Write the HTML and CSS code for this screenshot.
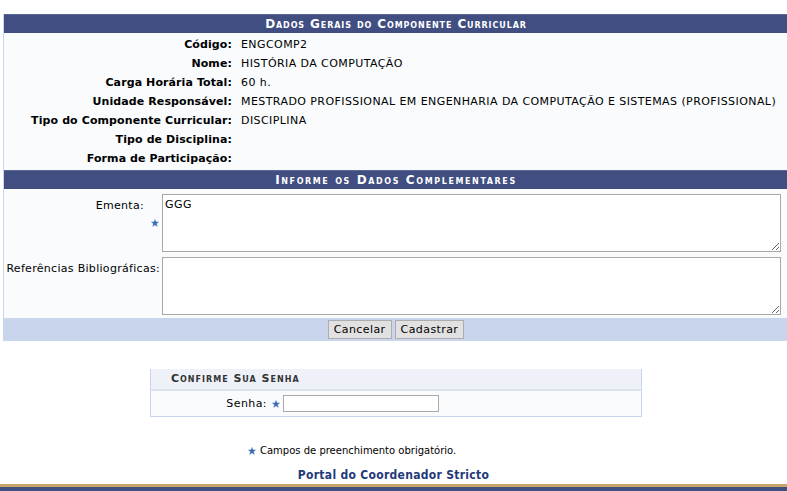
FILE: index.html
```html
<!DOCTYPE html>
<html lang="pt-BR">
<head>
<meta charset="utf-8">
<title>Portal do Coordenador Stricto</title>
<link rel="stylesheet" href="styles.css">
</head>
<body>
<div class="page">
  <section class="form">
    <div class="caption">Dados Gerais do Componente Curricular</div>
    <dl class="info">
      <dt>Código:</dt><dd>ENGCOMP2</dd>
      <dt>Nome:</dt><dd>HISTÓRIA DA COMPUTAÇÃO</dd>
      <dt>Carga Horária Total:</dt><dd>60 h.</dd>
      <dt>Unidade Responsável:</dt><dd>MESTRADO PROFISSIONAL EM ENGENHARIA DA COMPUTAÇÃO E SISTEMAS (PROFISSIONAL)</dd>
      <dt>Tipo do Componente Curricular:</dt><dd>DISCIPLINA</dd>
      <dt>Tipo de Disciplina:</dt><dd></dd>
      <dt>Forma de Participação:</dt><dd></dd>
    </dl>
    <div class="caption caption-wide">Informe os Dados Complementares</div>
    <div class="fields">
      <label class="lbl req" for="ementa">
        <span class="lbl-text">Ementa:</span>
        <svg class="star" viewBox="0 0 10 10" width="8" height="8"><polygon points="5,0.3 6.3,3.5 9.7,3.6 7.1,5.8 8,9.4 5,7.4 2,9.4 2.9,5.8 0.3,3.6 3.7,3.5"/></svg>
      </label>
      <textarea id="ementa" class="area">GGG</textarea>
      <label class="lbl" for="refs"><span class="lbl-text">Referências Bibliográficas:</span></label>
      <textarea id="refs" class="area"></textarea>
    </div>
    <div class="actions">
      <button type="button" class="btn">Cancelar</button>
      <button type="button" class="btn">Cadastrar</button>
    </div>
  </section>

  <section class="confirm">
    <div class="confirm-head">Confirme Sua Senha</div>
    <div class="confirm-row">
      <label class="confirm-lbl" for="senha">Senha:</label>
      <svg class="star" viewBox="0 0 10 10" width="8" height="8"><polygon points="5,0.3 6.3,3.5 9.7,3.6 7.1,5.8 8,9.4 5,7.4 2,9.4 2.9,5.8 0.3,3.6 3.7,3.5"/></svg>
      <input id="senha" type="password" class="pass">
    </div>
  </section>

  <p class="note">
    <svg class="star" viewBox="0 0 10 10" width="8" height="8"><polygon points="5,0.3 6.3,3.5 9.7,3.6 7.1,5.8 8,9.4 5,7.4 2,9.4 2.9,5.8 0.3,3.6 3.7,3.5"/></svg>
    <span>Campos de preenchimento obrigatório.</span>
  </p>

  <footer class="portal">
    <a class="portal-link" href="#">Portal do Coordenador Stricto</a>
  </footer>
</div>
<div class="bottom-bar"></div>
</body>
</html>
```

FILE: styles.css
```css
html, body {
  margin: 0;
  padding: 0;
  background: #fff;
}

body {
  font-family: "DejaVu Sans", Verdana, sans-serif;
  font-size: 11px;
  letter-spacing: 0.42px;
  color: #000;
  overflow: hidden;
}

.page {
  padding-top: 14px;
}

/* main form block */
.form {
  margin-left: 3px;
  width: 790px;
  border-left: 1px solid #c8d5ec;
  background: #f9fbfd;
}

.caption {
  height: 18px;
  line-height: 18px;
  background: #404e82;
  color: #fff;
  font-weight: bold;
  font-variant: small-caps;
  font-size: 12px;
  letter-spacing: 0.9px;
  text-align: center;
  padding-right: 6px;
  border-top: 1px solid #5b6799;
}

.caption-wide {
  letter-spacing: 1.6px;
}

.info {
  display: grid;
  grid-template-columns: 228px 1fr;
  column-gap: 9px;
  margin: 0;
  padding: 2px 0;
}

.info dt,
.info dd {
  margin: 0;
  height: 19px;
  line-height: 19px;
  white-space: nowrap;
}

.info dt {
  font-weight: bold;
  text-align: right;
  letter-spacing: 0.1px;
}

.fields {
  display: grid;
  grid-template-columns: 158px 1fr;
  row-gap: 5px;
  padding: 5px 0 3px;
}

.lbl {
  display: flex;
  justify-content: flex-end;
  padding-right: 2px;
  white-space: nowrap;
  letter-spacing: 0.3px;
}

.lbl-text {
  align-self: flex-start;
  padding-top: 5px;
}

.req .lbl-text {
  padding-right: 7px;
}

.req .star {
  align-self: center;
  margin-right: 1px;
}

.star {
  flex: none;
  fill: #3d6bb3;
  stroke: #7d9bd0;
  stroke-width: 0.4;
}

.area {
  display: block;
  box-sizing: border-box;
  width: 619px;
  height: 58px;
  margin: 0;
  padding: 3px 2px;
  border: 1px solid #a9a9a9;
  font-family: "DejaVu Sans", Verdana, sans-serif;
  font-size: 11px;
  letter-spacing: 0.42px;
  line-height: 14px;
  background: #fff;
  color: #000;
}

.actions {
  display: flex;
  justify-content: center;
  gap: 3px;
  height: 23px;
  align-items: center;
  background: #c8d5ec;
  padding-right: 6px;
}

.btn {
  height: 19px;
  padding: 0 5px;
  border: 1px solid #adadad;
  background: #e1e1e1;
  font-family: "DejaVu Sans", Verdana, sans-serif;
  font-size: 11px;
  letter-spacing: 0.42px;
  color: #000;
  line-height: 15px;
}

/* password confirmation box */
.confirm {
  width: 490px;
  margin: 28px 0 0 150px;
  border: 1px solid #c8d5ec;
  border-top: none;
  background: #f9fbfd;
}

.confirm-head {
  height: 20px;
  line-height: 20px;
  background: #eef2f8;
  border-bottom: 2px solid #dbe3f0;
  padding-left: 20px;
  font-weight: bold;
  font-variant: small-caps;
  font-size: 11px;
  letter-spacing: 1px;
  color: #333;
}

.confirm-row {
  display: flex;
  align-items: center;
  height: 25px;
}

.confirm-lbl {
  width: 116px;
  text-align: right;
  padding-right: 5px;
  color: #000;
}

.confirm-row .star {
  margin-right: 3px;
}

.pass {
  box-sizing: border-box;
  width: 156px;
  height: 17px;
  margin: 0;
  border: 1px solid #a9a9a9;
  background: #fff;
  padding: 0 2px;
}

.note {
  display: flex;
  align-items: center;
  gap: 4px;
  margin: 28px 0 0 248px;
  font-family: "DejaVu Sans", sans-serif;
  font-size: 10px;
  letter-spacing: 0;
  color: #000;
}

.portal {
  text-align: center;
  margin-top: 12px;
}

.portal-link {
  font-family: "DejaVu Sans Condensed", "DejaVu Sans", sans-serif;
  font-weight: bold;
  font-size: 12px;
  letter-spacing: 0.3px;
  color: #1f3a7a;
  text-decoration: none;
}

.bottom-bar {
  margin-top: 2px;
  height: 20px;
  background: #404e82;
  border-top: 3px solid #c9a46a;
}
```
